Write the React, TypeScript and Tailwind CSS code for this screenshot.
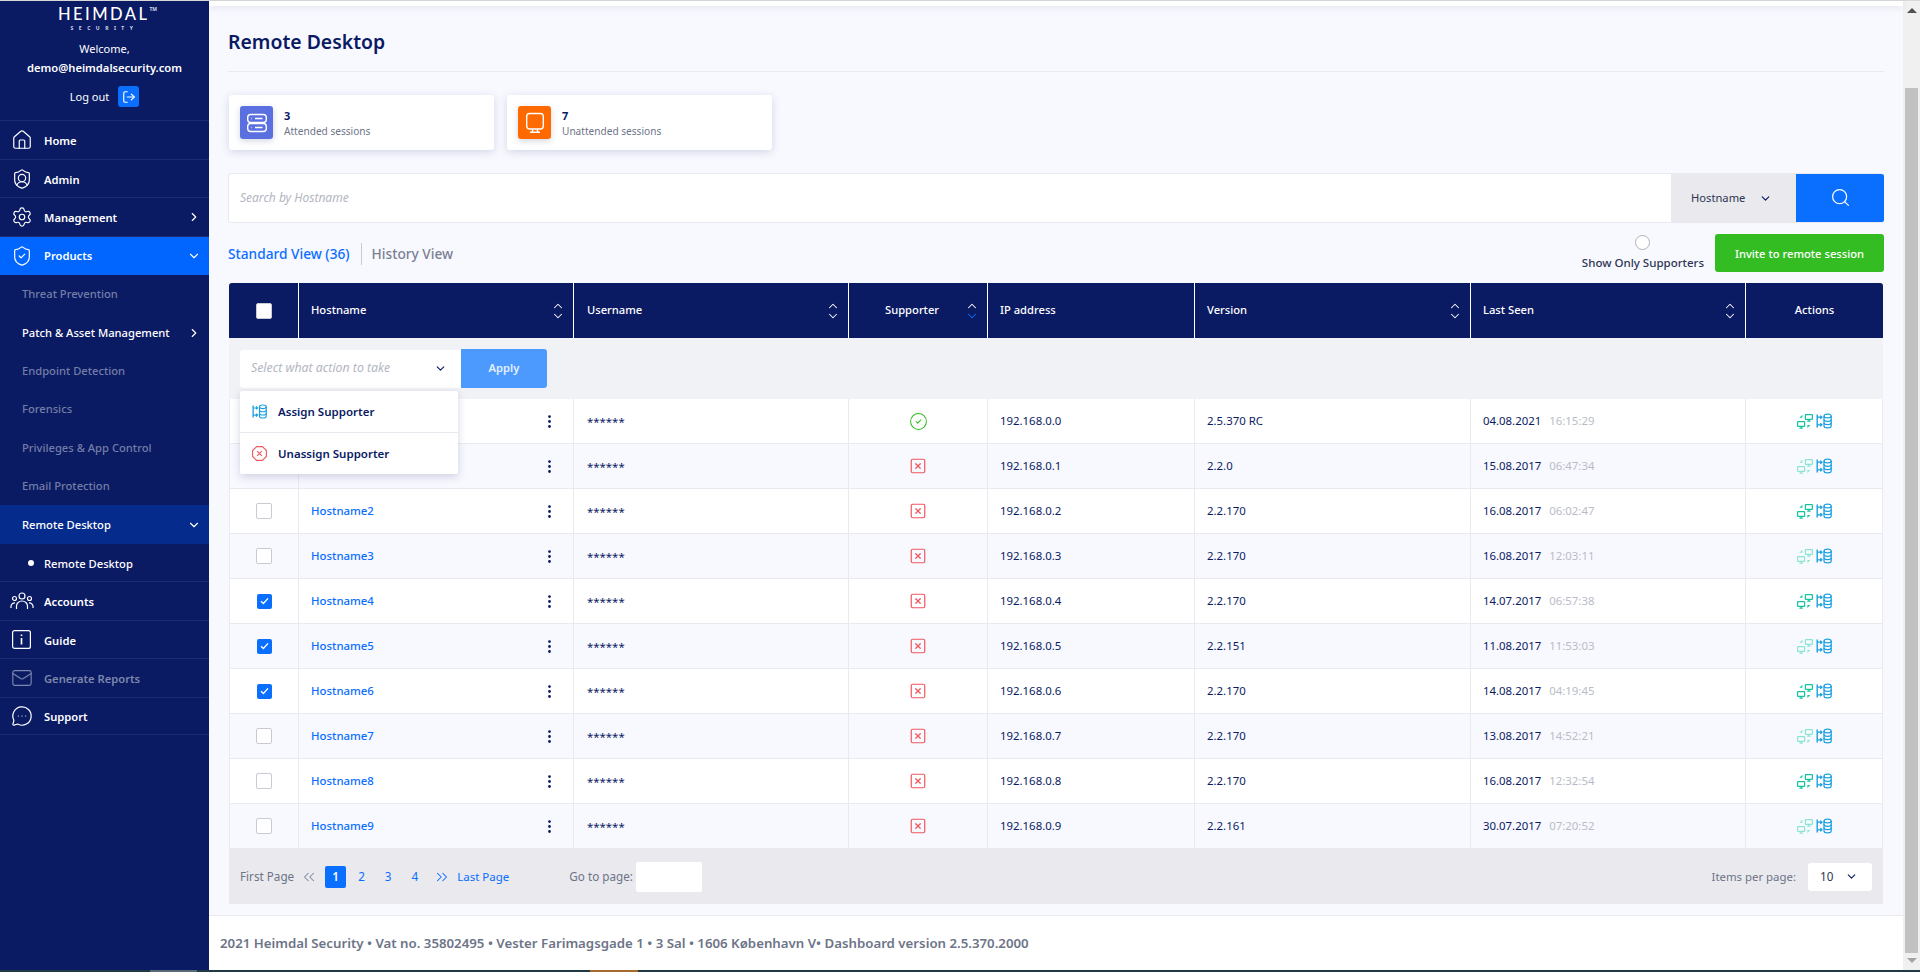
import {
  ChevronDown,
  ChevronRight,
  ChevronUp,
  ChevronsLeft,
  ChevronsRight,
  CircleCheck,
  EllipsisVertical,
  Home,
  LogOut,
  Mail,
  MessageCircleMore,
  Search,
  Settings,
  ShieldCheck,
  ShieldUser,
  SquareX,
} from "lucide-react";
import { ReactNode } from "react";

const columns = "grid grid-cols-[70px_275px_275px_139px_207px_276px_275px_137px]";

const rows = [
  { version: "2.5.370 RC", date: "04.08.2021", time: "16:15:29" },
  { version: "2.2.0", date: "15.08.2017", time: "06:47:34" },
  { version: "2.2.170", date: "16.08.2017", time: "06:02:47" },
  { version: "2.2.170", date: "16.08.2017", time: "12:03:11" },
  { version: "2.2.170", date: "14.07.2017", time: "06:57:38" },
  { version: "2.2.151", date: "11.08.2017", time: "11:53:03" },
  { version: "2.2.170", date: "14.08.2017", time: "04:19:45" },
  { version: "2.2.170", date: "13.08.2017", time: "14:52:21" },
  { version: "2.2.170", date: "16.08.2017", time: "12:32:54" },
  { version: "2.2.161", date: "30.07.2017", time: "07:20:52" },
];

function AccountsIcon() {
  return (
    <svg width="24" height="20" viewBox="0 0 24 20" fill="none" stroke="currentColor" strokeWidth="1.2">
      <circle cx="12" cy="5" r="3" />
      <circle cx="4.5" cy="7.5" r="2" />
      <circle cx="19.5" cy="7.5" r="2" />
      <path d="M6.5 18v-3a5.5 5 0 0 1 11 0v3" />
      <path d="M1 17v-2a3.5 3.5 0 0 1 4-3" />
      <path d="M23 17v-2a3.5 3.5 0 0 0-4-3" />
    </svg>
  );
}

function GuideIcon() {
  return (
    <svg width="19" height="19" viewBox="0 0 19 19" fill="none" stroke="currentColor" strokeWidth="1.2">
      <rect x="0.6" y="0.6" width="17.8" height="17.8" rx="2" />
      <path d="M9.5 8v6.5" strokeWidth="1.6" />
      <path d="M9.5 4.5v1.6" strokeWidth="1.6" />
    </svg>
  );
}

function ServerIcon() {
  return (
    <svg width="24" height="24" viewBox="0 0 24 24" fill="none" stroke="white" strokeWidth="1.4">
      <rect x="2.7" y="3.5" width="18.6" height="8" rx="3" />
      <rect x="2.7" y="12.5" width="18.6" height="8" rx="3" />
      <path d="M6.5 7.5h.6M10 7.5h7.5M6.5 16.5h.6M10 16.5h7.5" />
    </svg>
  );
}

function MonitorIcon() {
  return (
    <svg width="24" height="24" viewBox="0 0 24 24" fill="none" stroke="white" strokeWidth="1.4">
      <rect x="3.7" y="2.5" width="16.6" height="15.5" rx="3" />
      <path d="M9.5 18v3M14.5 18v3M7 21.3h10" />
    </svg>
  );
}

// monitors swapping, used in the actions column
function RemoteIcon({ light }: { light: boolean }) {
  const color = light ? "#8ae6d3" : "#13c6a0";
  return (
    <svg width="16" height="15" viewBox="0 0 16 15" fill="none" stroke={color} strokeWidth="1.2">
      <rect x="8.4" y="0.6" width="7" height="4.8" rx="0.5" />
      <path d="M11.9 5.4v1.5M10.2 7.1h3.4" />
      <rect x="0.6" y="7.6" width="7" height="4.8" rx="0.5" />
      <path d="M4.1 12.4v1.5M2.4 14.2h3.4" />
      <path d="M5.4 0.8v3H2.4z" fill={color} stroke="none" />
      <path d="M10.4 14v-3h3z" fill={color} stroke="none" />
    </svg>
  );
}

function AssignIcon({ size = 16 }: { size?: number }) {
  return (
    <svg width={size} height={size} viewBox="0 0 16 16" fill="none" stroke="#1aa0e0" strokeWidth="1.2">
      <path d="M1.2 1.5v13" strokeWidth="1.4" />
      <path d="M1.2 4.2h4.6M4.3 2.6l1.7 1.6-1.7 1.6" />
      <path d="M1.2 11.8h4.6M4.3 10.2l1.7 1.6-1.7 1.6" />
      <ellipse cx="11.6" cy="3" rx="3.6" ry="1.9" />
      <path d="M8 3v10c0 1 1.6 1.9 3.6 1.9s3.6-.9 3.6-1.9V3" />
      <path d="M8 6.4c0 1 1.6 1.9 3.6 1.9s3.6-.9 3.6-1.9M8 9.8c0 1 1.6 1.9 3.6 1.9s3.6-.9 3.6-1.9" />
    </svg>
  );
}

function NavRow({
  icon,
  label,
  arrow,
  height,
  dim,
}: {
  icon: ReactNode;
  label: string;
  arrow?: "right" | "down";
  height: string;
  dim?: boolean;
}) {
  return (
    <div className={`flex items-center border-b border-[#1c2c70] pr-[8px] ${height}`}>
      <div className={`flex w-[44px] shrink-0 justify-center pr-[1px] ${dim ? "text-[#7e88ad]" : "text-white"}`}>{icon}</div>
      <span className={`flex-1 pt-[3px] text-[11.2px] font-semibold ${dim ? "text-[#7e88ad]" : "text-white"}`}>{label}</span>
      {arrow === "right" && <ChevronRight size={14} className="text-white" />}
      {arrow === "down" && <ChevronDown size={14} className="text-white" />}
    </div>
  );
}

function SubRow({ label, active, arrow }: { label: string; active?: boolean; arrow?: ReactNode }) {
  return (
    <div className="flex h-[38.4px] items-center pl-[22px] pr-[8px]">
      <span className={`flex-1 pt-[1px] text-[11.2px] font-medium ${active ? "text-white" : "text-[#737ea6]"}`}>{label}</span>
      {arrow}
    </div>
  );
}

function Sidebar() {
  return (
    <aside className="flex w-[209px] shrink-0 flex-col bg-[#0a1a63]">
      <div className="flex h-[120px] flex-col items-center border-b border-[#1c2c70] pt-[5px]">
        <div className="flex h-[16px] items-start pl-[6px]">
          <span className="text-[16.5px] leading-[16px] font-medium tracking-[0.15em] text-white font-['Lato',sans-serif]">HEIMDAL</span>
          <span className="mt-[-1px] text-[5px] leading-[8px] font-bold text-[#d5d8e6]">TM</span>
        </div>
        <div className="mt-[2px] h-[8px] text-[5px] leading-[8px] font-bold tracking-[1.1em] text-[#d5d8e6]">SECURITY</div>
        <div className="mt-[9px] text-[11px] leading-[16px] text-white">Welcome,</div>
        <div className="mt-[3px] text-[11.2px] leading-[16px] font-semibold text-white">demo@heimdalsecurity.com</div>
        <div className="mt-[10px] flex items-center gap-[9px]">
          <span className="pt-[1px] text-[11px] text-white">Log out</span>
          <span className="flex h-[21px] w-[21px] items-center justify-center rounded-[3px] bg-[#0a6eff] text-white">
            <LogOut size={14} strokeWidth={2} />
          </span>
        </div>
      </div>
      <NavRow icon={<Home size={22} strokeWidth={1.3} />} label="Home" height="h-[39px]" />
      <NavRow icon={<ShieldUser size={22} strokeWidth={1.3} />} label="Admin" height="h-[38px]" />
      <NavRow icon={<Settings size={22} strokeWidth={1.3} />} label="Management" arrow="right" height="h-[39px]" />
      <div className="flex h-[38px] items-center bg-[#0066ff] pr-[8px]">
        <div className="flex w-[44px] justify-center pr-[1px] text-white">
          <ShieldCheck size={22} strokeWidth={1.3} />
        </div>
        <span className="flex-1 text-[11.2px] font-semibold text-white">Products</span>
        <ChevronDown size={14} className="text-white" />
      </div>
      <SubRow label="Threat Prevention" />
      <SubRow label="Patch & Asset Management" active arrow={<ChevronRight size={14} className="text-white" />} />
      <SubRow label="Endpoint Detection" />
      <SubRow label="Forensics" />
      <SubRow label="Privileges & App Control" />
      <SubRow label="Email Protection" />
      <div className="flex h-[39px] items-center bg-[#052c8c] pl-[22px] pr-[8px]">
        <span className="flex-1 pt-[2px] text-[11.2px] font-medium text-white">Remote Desktop</span>
        <ChevronDown size={14} className="text-white" />
      </div>
      <div className="flex h-[38px] items-center border-b border-[#1c2c70] pl-[28px]">
        <span className="mr-[10px] h-[6px] w-[6px] rounded-full bg-white" />
        <span className="pt-[3px] text-[11.2px] font-medium text-white">Remote Desktop</span>
      </div>
      <NavRow icon={<AccountsIcon />} label="Accounts" height="h-[39px]" />
      <NavRow icon={<GuideIcon />} label="Guide" height="h-[38px]" />
      <NavRow icon={<Mail size={22} strokeWidth={1.2} />} label="Generate Reports" height="h-[39px]" dim />
      <NavRow icon={<MessageCircleMore size={22} strokeWidth={1.3} />} label="Support" height="h-[37px]" />
    </aside>
  );
}

function SessionCard({ count, label, icon, color }: { count: string; label: string; icon: ReactNode; color: string }) {
  return (
    <div className="flex h-[55px] w-[265px] items-center rounded-[3px] bg-white pl-[11px] shadow-[0_2px_8px_rgba(40,50,110,0.18)]">
      <div className={`flex h-[33px] w-[33px] items-center justify-center rounded-[3px] shadow-[0_2px_6px_rgba(40,50,110,0.2)] ${color}`}>
        {icon}
      </div>
      <div className="ml-[11px] flex flex-col pt-[2px]">
        <span className="text-[11px] leading-[15px] font-bold text-[#0a1a63]">{count}</span>
        <span className="text-[10.1px] leading-[16px] text-[#6d7488]">{label}</span>
      </div>
    </div>
  );
}

function SortIcon({ active }: { active?: boolean }) {
  return (
    <span className="flex flex-col items-center text-white">
      <ChevronUp size={14} strokeWidth={1.8} className="mb-[-4px]" />
      <ChevronDown size={14} strokeWidth={1.8} className={active ? "text-[#0a6eff]" : ""} />
    </span>
  );
}

function HeaderCell({
  label,
  sort,
  active,
  center,
  pad = "pl-[13px]",
}: {
  label: string;
  sort?: boolean;
  active?: boolean;
  center?: boolean;
  pad?: string;
}) {
  return (
    <div className={`flex items-center border-r border-white text-[11.2px] font-medium text-white last:border-r-0 ${center ? "justify-center" : pad} ${sort ? "pr-[8px]" : ""}`}>
      <span className={sort ? "flex-1" : ""}>{label}</span>
      {sort && <SortIcon active={active} />}
    </div>
  );
}

function Checkbox({ checked }: { checked: boolean }) {
  if (checked) {
    return (
      <span className="flex h-[15px] w-[15px] items-center justify-center rounded-[2px] bg-[#0a6eff]">
        <svg width="9" height="8" viewBox="0 0 9 8" fill="none" stroke="white" strokeWidth="1.4">
          <path d="M1 4.2l2.4 2.2L8 1.4" />
        </svg>
      </span>
    );
  }
  return <span className="h-[16px] w-[16px] rounded-[2px] border-[1.5px] border-[#c9cbd3] bg-white" />;
}

function Row({ index, data }: { index: number; data: (typeof rows)[number] }) {
  const cell = "flex items-center border-r border-[#e9eaf0] text-[11.4px] text-[#0a1a63]";
  const zebra = index % 2 === 1;
  // the action menu lies over the first two rows, their checkbox and name are not seen
  const covered = index < 2;
  return (
    <div className={`${columns} h-[45px] border-b border-[#e9eaf0] ${zebra ? "bg-[#f8f9ff]" : "bg-white"}`}>
      <div className={`${cell} justify-center border-l`}>{!covered && <Checkbox checked={index >= 4 && index <= 6} />}</div>
      <div className={`${cell} justify-between pl-[12px] pr-[15px]`}>
        <span className="font-medium text-[#0a6eff]">{covered ? "" : `Hostname${index}`}</span>
        <EllipsisVertical size={17} strokeWidth={2} className="text-[#0a1a63]" />
      </div>
      <div className={`${cell} pl-[13px] pt-[2px] text-[11.2px]`}>******</div>
      <div className={`${cell} justify-center`}>
        {index === 0 ? (
          <CircleCheck size={19} strokeWidth={1.3} className="text-[#33bd22]" />
        ) : (
          <SquareX size={18} strokeWidth={1.6} className="text-[#f0575f]" />
        )}
      </div>
      <div className={`${cell} pl-[12px]`}>192.168.0.{index}</div>
      <div className={`${cell} pl-[12px]`}>{data.version}</div>
      <div className={`${cell} pl-[12px]`}>
        {data.date}
        <span className="ml-[8px] text-[#b9bcc8]">{data.time}</span>
      </div>
      <div className="flex items-center justify-center gap-[3px] border-r border-[#e9eaf0]">
        <RemoteIcon light={zebra} />
        <AssignIcon />
      </div>
    </div>
  );
}

function ActionBand() {
  return (
    <div className="relative flex h-[61px] items-center bg-[#f1f2f6] pl-[11px]">
      <div className="flex h-[38px] w-[221px] items-center rounded-l-[3px] bg-white pl-[11px] pr-[14px]">
        <span className="flex-1 text-[12.3px] text-[#b3b6c2] italic">Select what action to take</span>
        <ChevronDown size={13} strokeWidth={2} className="text-[#0a1a63]" />
      </div>
      <div className="flex h-[39px] w-[86px] items-center justify-center rounded-r-[3px] bg-[#4d9aff] text-[11.2px] font-semibold text-[#e4efff]">
        Apply
      </div>
      <div className="absolute top-[53px] left-[11px] z-10 w-[218px] rounded-[2px] bg-white shadow-[0_3px_8px_rgba(40,50,110,0.2)]">
        <div className="flex h-[42px] items-center border-b border-[#e9eaf0] pl-[12px] text-[11.5px] font-semibold text-[#0a1a63]">
          <AssignIcon size={15} />
          <span className="ml-[11px]">Assign Supporter</span>
        </div>
        <div className="flex h-[41px] items-center pl-[12px] text-[11.5px] font-semibold text-[#0a1a63]">
          <svg width="15" height="15" viewBox="0 0 15 15" fill="none" stroke="#f0575f" strokeWidth="1.1">
            <path d="M4.6.6h5.8l4 4v5.8l-4 4H4.6l-4-4V4.6z" />
            <path d="M5.2 5.2l4.6 4.6M9.8 5.2l-4.6 4.6" />
          </svg>
          <span className="ml-[11px]">Unassign Supporter</span>
        </div>
      </div>
    </div>
  );
}

function Pagination() {
  return (
    <div className="flex h-[55px] items-center bg-[#e9e9ee] pl-[11px] pr-[11px] text-[11.7px]">
      <span className="text-[#6d7488]">First Page</span>
      <ChevronsLeft size={18} strokeWidth={1.4} className="ml-[6px] text-[#7f86a0]" />
      <span className="ml-[7px] flex h-[22px] w-[21px] items-center justify-center rounded-[2px] bg-[#0a6eff] font-semibold text-white">1</span>
      <span className="ml-[12px] text-[#0a6eff]">2</span>
      <span className="ml-[20px] text-[#0a6eff]">3</span>
      <span className="ml-[20px] text-[#0a6eff]">4</span>
      <ChevronsRight size={18} strokeWidth={1.4} className="ml-[15px] text-[#0a6eff]" />
      <span className="ml-[6px] text-[11.5px] text-[#0a6eff]">Last Page</span>
      <span className="ml-[60px] text-[#6d7488]">Go to page:</span>
      <span className="ml-[3px] h-[30px] w-[66px] rounded-[2px] bg-white" />
      <span className="ml-auto text-[11.4px] text-[#6d7488]">Items per page:</span>
      <div className="ml-[12px] flex h-[28px] w-[64px] items-center rounded-[3px] bg-white pl-[12px] pr-[14px]">
        <span className="flex-1 text-[#2e3554]">10</span>
        <ChevronDown size={13} strokeWidth={2} className="text-[#0a1a63]" />
      </div>
    </div>
  );
}

export default function App() {
  return (
    <div className="flex h-[972px] flex-col overflow-hidden bg-white font-['Noto_Sans',sans-serif]">
      <div className="h-[1px] shrink-0 bg-[#d8d8d8]" />
      <div className="flex min-h-0 flex-1">
        <Sidebar />
        <div className="flex min-w-0 flex-1 flex-col">
          <div className="relative z-10 h-[5px] shrink-0 bg-white shadow-[0_2px_6px_rgba(40,50,110,0.1)]" />
          <main className="h-[909px] shrink-0 bg-[#f8f9ff] pl-[19px] pr-[19px]">
            <h1 className="flex h-[66px] items-center border-b border-[#e9eaf0] pt-[6px] text-[19.4px] font-semibold text-[#0a1a63]">Remote Desktop</h1>
            <div className="ml-[1px] mt-[23px] flex gap-[13px]">
              <SessionCard count="3" label="Attended sessions" color="bg-[#5a6fe0]" icon={<ServerIcon />} />
              <SessionCard count="7" label="Unattended sessions" color="bg-[#ff6a00]" icon={<MonitorIcon />} />
            </div>
            <div className="mt-[23px] flex h-[50px] overflow-hidden rounded-[3px] border border-[#e9eaf0] border-r-0 bg-white">
              <div className="flex flex-1 items-center pl-[11px] text-[12px] text-[#b3b6c2] italic">Search by Hostname</div>
              <div className="flex w-[125px] items-center bg-[#e9e9ee] pl-[20px] pr-[24px]">
                <span className="flex-1 text-[11.2px] text-[#2e3554]">Hostname</span>
                <ChevronDown size={13} strokeWidth={2.2} className="text-[#0a1a63]" />
              </div>
              <div className="flex w-[88px] items-center justify-center bg-[#0a6eff] pb-[2px] text-white">
                <Search size={21} strokeWidth={1.4} />
              </div>
            </div>
            <div className="mt-[11px] flex h-[49px]">
              <div className="flex h-[38px] items-center pt-[2px]">
                <span className="text-[13.7px] font-medium text-[#0a6eff]">Standard View (36)</span>
                <span className="ml-[11px] h-[22px] w-[1px] bg-[#c9ccd8]" />
                <span className="ml-[10px] text-[13.7px] font-medium text-[#7a8092]">History View</span>
              </div>
              <div className="ml-auto flex flex-col items-center pl-[2px] pt-[1px]">
                <span className="h-[15px] w-[15px] rounded-full border border-[#aeb1bb] bg-white" />
                <span className="mt-[5px] text-[11.5px] leading-[16px] font-medium text-[#2e3554]">Show Only Supporters</span>
              </div>
              <div className="ml-[11px] flex h-[38px] w-[169px] items-center justify-center rounded-[3px] bg-[#33bd22] pt-[2px] text-[11.2px] font-medium text-white">
                Invite to remote session
              </div>
            </div>
            <div className="ml-[1px] w-[1654px]">
              <div className={`${columns} h-[55px] rounded-t-[3px] bg-[#0a1a63]`}>
                <div className="flex items-center justify-center border-r border-white">
                  <span className="h-[16px] w-[16px] rounded-[2px] border-[1.5px] border-[#c9cbd3] bg-white" />
                </div>
                <HeaderCell label="Hostname" sort pad="pl-[12px]" />
                <HeaderCell label="Username" sort />
                <HeaderCell label="Supporter" sort active pad="pl-[36px]" />
                <HeaderCell label="IP address" pad="pl-[12px]" />
                <HeaderCell label="Version" sort pad="pl-[12px]" />
                <HeaderCell label="Last Seen" sort pad="pl-[12px]" />
                <HeaderCell label="Actions" center />
              </div>
              <ActionBand />
              {rows.map((row, i) => (
                <Row key={i} index={i} data={row} />
              ))}
              <Pagination />
            </div>
          </main>
          <footer className="flex flex-1 items-start border-t border-[#e9eaf0] bg-white pl-[11px] pt-[18px] text-[13.25px] font-semibold text-[#6d7488]">
            2021 Heimdal Security • Vat no. 35802495 • Vester Farimagsgade 1 • 3 Sal • 1606 København V• Dashboard version 2.5.370.2000
          </footer>
        </div>
        <div className="flex w-[17px] shrink-0 flex-col items-center bg-[#f0f0f0]">
          <div className="mt-[7px] h-0 w-0 border-x-[5px] border-b-[5px] border-x-transparent border-b-[#505050]" />
          <div className="mt-[75px] h-[865px] w-[13px] bg-[#c1c1c1]" />
          <div className="mt-[5px] h-0 w-0 border-x-[5px] border-t-[5px] border-x-transparent border-t-[#a3a3a3]" />
        </div>
      </div>
      <div className="flex h-[2px] shrink-0 bg-[#1f3a45]">
        <div className="ml-[150px] w-[47px] bg-[#5a6a75]" />
        <div className="ml-[393px] w-[48px] bg-[#a66a2c]" />
      </div>
    </div>
  );
}
